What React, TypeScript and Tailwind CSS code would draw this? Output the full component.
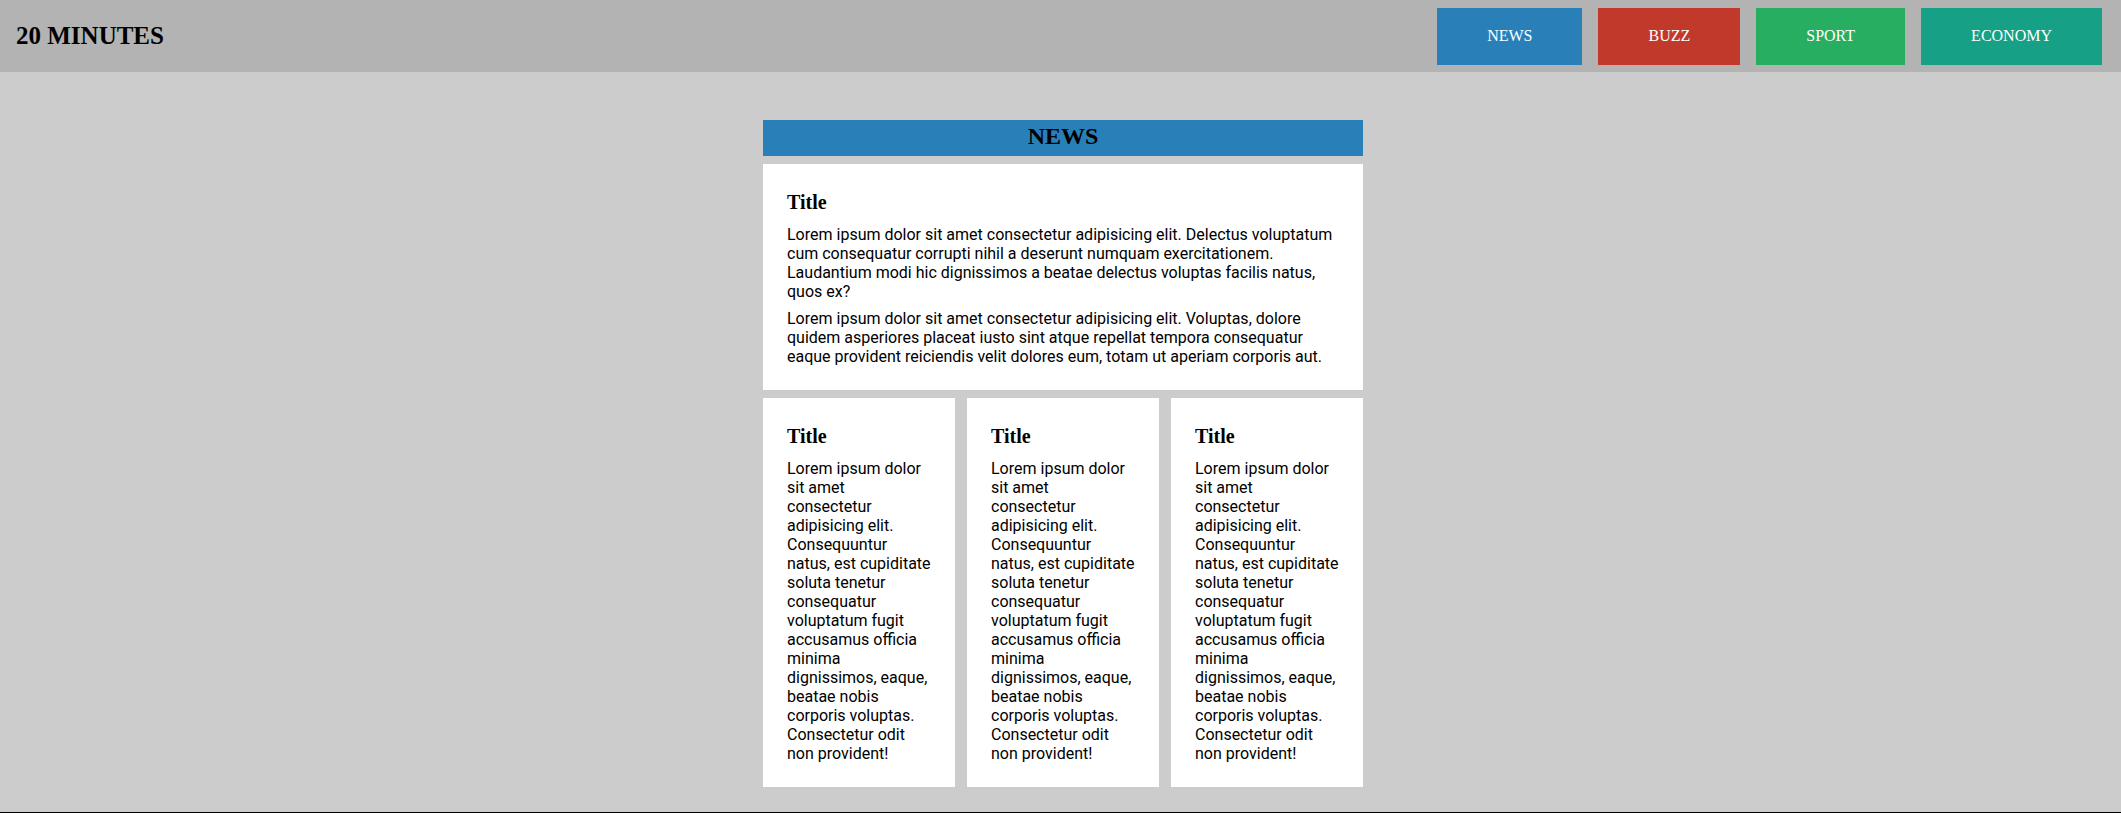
const nav = [
  { label: "NEWS", color: "bg-[#2980b9]" },
  { label: "BUZZ", color: "bg-[#c0392b]" },
  { label: "SPORT", color: "bg-[#27ae60]" },
  { label: "ECONOMY", color: "bg-[#16a085]" },
]

const serif = "font-['Liberation_Serif',serif]"

function Card({ children }: { children: React.ReactNode }) {
  return (
    <article className="bg-white px-6 pt-[27px] pb-6">
      <h3 className={`${serif} text-[20px] leading-[22px] font-bold mb-3`}>Title</h3>
      <div className="font-['Roboto',sans-serif] text-[16px] leading-[19px] flex flex-col gap-2">{children}</div>
    </article>
  )
}

export default function App() {
  return (
    <div className="h-screen flex flex-col bg-[#cccccc] text-black">
      {/* header */}
      <header className="h-[72px] shrink-0 bg-[#b3b3b3] flex items-center justify-between pl-4 pr-[19px]">
        <h1 className={`${serif} text-[25px] leading-[28px] font-bold`}>20 MINUTES</h1>
        <nav className="flex gap-4 h-[57px]">
          {nav.map((n) => (
            <a key={n.label} className={`${n.color} ${serif} text-white text-[16px] leading-[24px] px-[50px] flex items-center`}>
              {n.label}
            </a>
          ))}
        </nav>
      </header>

      {/* content */}
      <main className="flex-1 flex justify-center pl-[5px] pt-12">
        <section className="w-[600px] flex flex-col gap-2">
          <h2 className={`${serif} h-9 bg-[#2980b9] text-center text-[24px] font-bold leading-[32px]`}>NEWS</h2>
          <Card>
            <p>
              Lorem ipsum dolor sit amet consectetur adipisicing elit. Delectus voluptatum cum consequatur corrupti nihil a
              deserunt numquam exercitationem. Laudantium modi hic dignissimos a beatae delectus voluptas facilis natus, quos ex?
            </p>
            <p>
              Lorem ipsum dolor sit amet consectetur adipisicing elit. Voluptas, dolore quidem asperiores placeat iusto sint
              atque repellat tempora consequatur eaque provident reiciendis velit dolores eum, totam ut aperiam corporis aut.
            </p>
          </Card>
          <div className="grid grid-cols-3 gap-3">
            {[0, 1, 2].map((i) => (
              <Card key={i}>
                <p>
                  Lorem ipsum dolor sit amet consectetur adipisicing elit. Consequuntur natus, est cupiditate soluta tenetur
                  consequatur voluptatum fugit accusamus officia minima dignissimos, eaque, beatae nobis corporis voluptas.
                  Consectetur odit non provident!
                </p>
              </Card>
            ))}
          </div>
        </section>
      </main>
      <div className="h-px shrink-0 bg-black" />
    </div>
  )
}
